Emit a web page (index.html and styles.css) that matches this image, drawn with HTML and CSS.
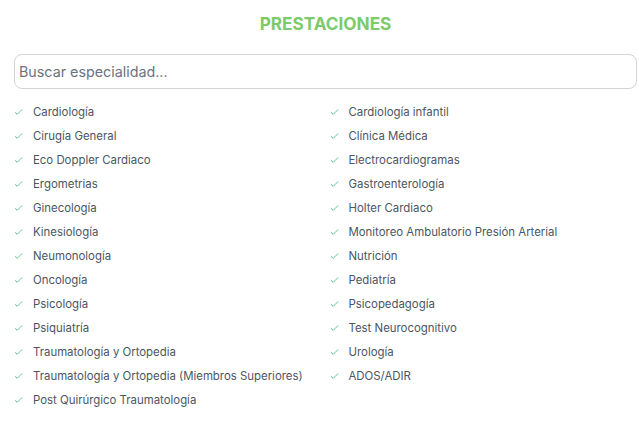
FILE: index.html
```html
<!DOCTYPE html>
<html lang="es">
<head>
<meta charset="utf-8">
<link rel="stylesheet" href="styles.css">
</head>
<body>
<div class="wrap">
  <h2 class="title">PRESTACIONES</h2>
  <input class="search" type="text" placeholder="Buscar especialidad...">
  <ul class="list">
    <li><svg class="ck" viewBox="0 0 10 8"><path d="M1 4.2 L3.6 6.6 L9 1.2"/></svg>Cardiología</li>
    <li><svg class="ck" viewBox="0 0 10 8"><path d="M1 4.2 L3.6 6.6 L9 1.2"/></svg>Cardiología infantil</li>
    <li><svg class="ck" viewBox="0 0 10 8"><path d="M1 4.2 L3.6 6.6 L9 1.2"/></svg>Cirugía General</li>
    <li><svg class="ck" viewBox="0 0 10 8"><path d="M1 4.2 L3.6 6.6 L9 1.2"/></svg>Clínica Médica</li>
    <li><svg class="ck" viewBox="0 0 10 8"><path d="M1 4.2 L3.6 6.6 L9 1.2"/></svg>Eco Doppler Cardiaco</li>
    <li><svg class="ck" viewBox="0 0 10 8"><path d="M1 4.2 L3.6 6.6 L9 1.2"/></svg>Electrocardiogramas</li>
    <li><svg class="ck" viewBox="0 0 10 8"><path d="M1 4.2 L3.6 6.6 L9 1.2"/></svg>Ergometrias</li>
    <li><svg class="ck" viewBox="0 0 10 8"><path d="M1 4.2 L3.6 6.6 L9 1.2"/></svg>Gastroenterología</li>
    <li><svg class="ck" viewBox="0 0 10 8"><path d="M1 4.2 L3.6 6.6 L9 1.2"/></svg>Ginecología</li>
    <li><svg class="ck" viewBox="0 0 10 8"><path d="M1 4.2 L3.6 6.6 L9 1.2"/></svg>Holter Cardiaco</li>
    <li><svg class="ck" viewBox="0 0 10 8"><path d="M1 4.2 L3.6 6.6 L9 1.2"/></svg>Kinesiología</li>
    <li><svg class="ck" viewBox="0 0 10 8"><path d="M1 4.2 L3.6 6.6 L9 1.2"/></svg>Monitoreo Ambulatorio Presión Arterial</li>
    <li><svg class="ck" viewBox="0 0 10 8"><path d="M1 4.2 L3.6 6.6 L9 1.2"/></svg>Neumonología</li>
    <li><svg class="ck" viewBox="0 0 10 8"><path d="M1 4.2 L3.6 6.6 L9 1.2"/></svg>Nutrición</li>
    <li><svg class="ck" viewBox="0 0 10 8"><path d="M1 4.2 L3.6 6.6 L9 1.2"/></svg>Oncología</li>
    <li><svg class="ck" viewBox="0 0 10 8"><path d="M1 4.2 L3.6 6.6 L9 1.2"/></svg>Pediatría</li>
    <li><svg class="ck" viewBox="0 0 10 8"><path d="M1 4.2 L3.6 6.6 L9 1.2"/></svg>Psicología</li>
    <li><svg class="ck" viewBox="0 0 10 8"><path d="M1 4.2 L3.6 6.6 L9 1.2"/></svg>Psicopedagogía</li>
    <li><svg class="ck" viewBox="0 0 10 8"><path d="M1 4.2 L3.6 6.6 L9 1.2"/></svg>Psiquiatría</li>
    <li><svg class="ck" viewBox="0 0 10 8"><path d="M1 4.2 L3.6 6.6 L9 1.2"/></svg>Test Neurocognitivo</li>
    <li><svg class="ck" viewBox="0 0 10 8"><path d="M1 4.2 L3.6 6.6 L9 1.2"/></svg>Traumatología y Ortopedia</li>
    <li><svg class="ck" viewBox="0 0 10 8"><path d="M1 4.2 L3.6 6.6 L9 1.2"/></svg>Urología</li>
    <li><svg class="ck" viewBox="0 0 10 8"><path d="M1 4.2 L3.6 6.6 L9 1.2"/></svg>Traumatología y Ortopedia (Miembros Superiores)</li>
    <li><svg class="ck" viewBox="0 0 10 8"><path d="M1 4.2 L3.6 6.6 L9 1.2"/></svg>ADOS/ADIR</li>
    <li><svg class="ck" viewBox="0 0 10 8"><path d="M1 4.2 L3.6 6.6 L9 1.2"/></svg>Post Quirúrgico Traumatología</li>
  </ul>
</div>
</body>
</html>
```
FILE: styles.css
```css
* { box-sizing: border-box; }
body {
  margin: 0;
  background: #fff;
  font-family: Inter, "Noto Sans", sans-serif;
}
.wrap {
  padding: 12px 2px 0 14px;
}
.title {
  margin: 0;
  text-align: center;
  font-size: 17.2px;
  font-weight: 700;
  line-height: 24px;
  color: #7cca6c;
}
.search {
  display: block;
  width: 100%;
  height: 35px;
  margin-top: 18px;
  padding: 0 4px;
  border: 1px solid #d4d4d8;
  border-radius: 8px;
  font-family: Inter, "Noto Sans", sans-serif;
  font-size: 14.3px;
  color: #374151;
  outline: none;
}
.search::placeholder { color: #6b7280; }
.list {
  list-style: none;
  margin: 11px 0 0;
  padding: 0;
  display: grid;
  grid-template-columns: 1fr 1fr;
  column-gap: 8px;
}
.list li {
  display: flex;
  align-items: center;
  height: 24px;
  font-size: 11.4px;
  color: #4b5563;
}
.ck {
  width: 9px;
  height: 8px;
  margin-right: 10px;
  fill: none;
  stroke: #4cbf86;
  stroke-width: 1;
}
```
